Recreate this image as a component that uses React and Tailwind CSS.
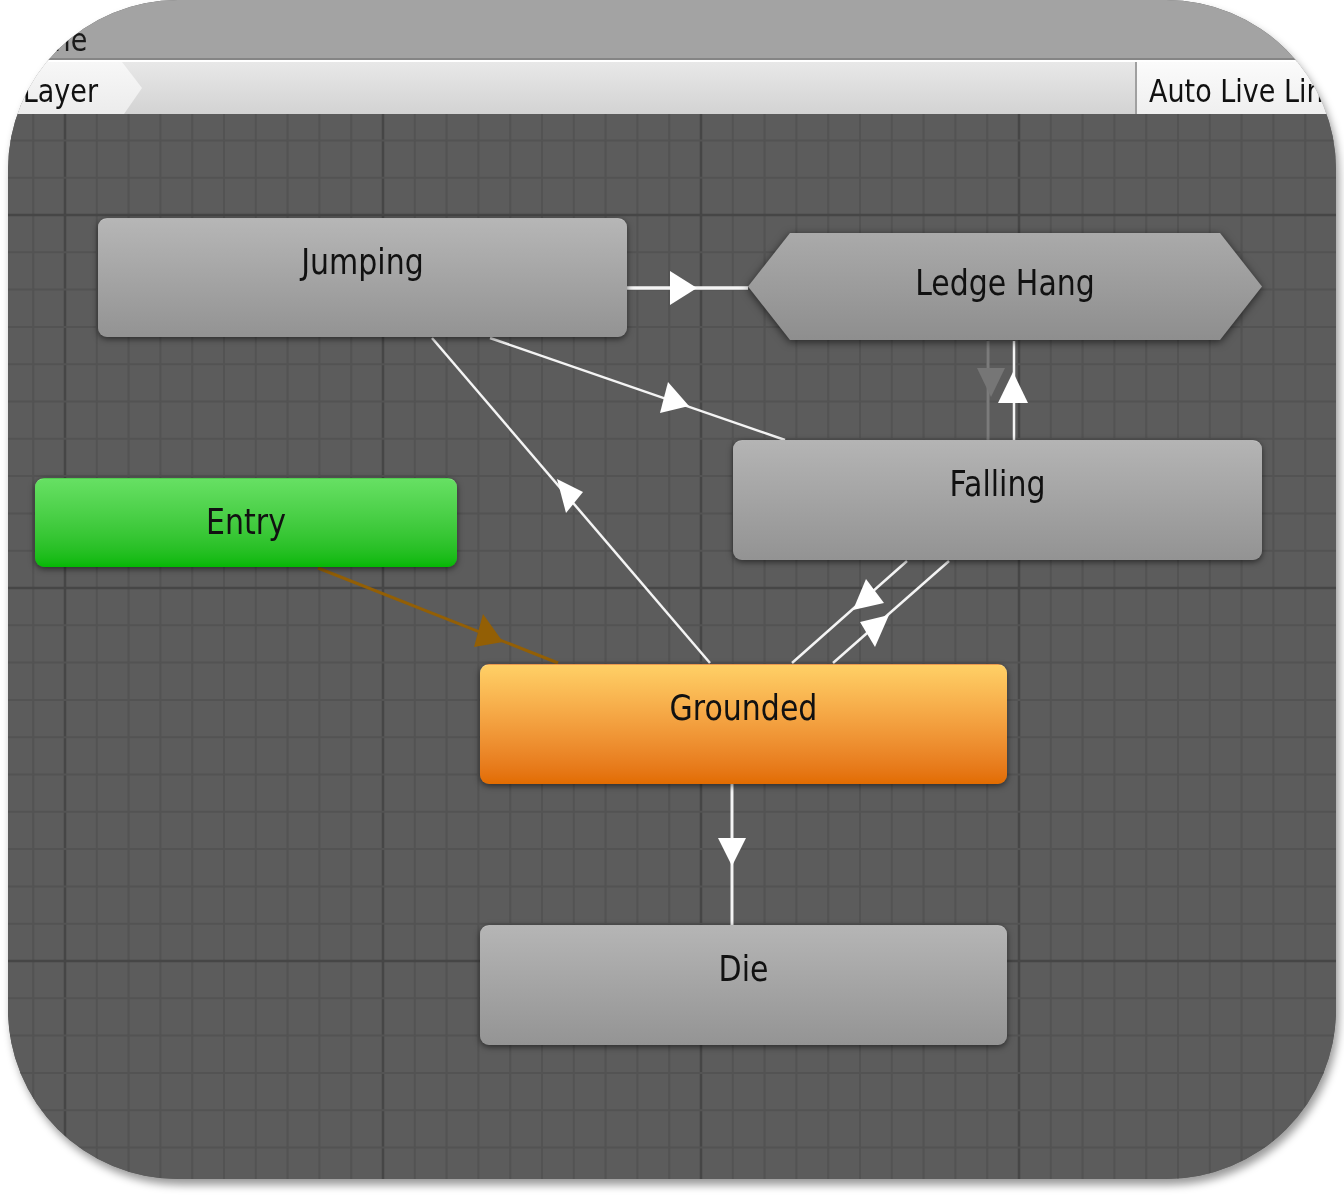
const GRID_X0 = 65;
const GRID_DX = 31.8;
const GRID_Y0 = 215;
const GRID_DY = 37.3;

function buildGrid() {
  const v = [];
  for (let k = -2; k <= 41; k++) {
    const x = GRID_X0 + GRID_DX * k;
    if (x > 8 && x < 1336) v.push({ at: x, major: k % 10 === 0 });
  }
  const h = [];
  for (let k = -2; k <= 27; k++) {
    const y = GRID_Y0 + GRID_DY * k;
    if (y > 114 && y < 1179) h.push({ at: y, major: k % 10 === 0 });
  }
  return { v, h };
}

const grid = buildGrid();

// transitions, in page coordinates
const EDGES = [
  { from: [627, 288], to: [748, 288], head: '697,288 670,271 670,305', w: 3.5 },
  { from: [490, 338], to: [785, 440], head: '689,406 668,382 660,413' },
  { from: [710, 663], to: [432, 338], head: '557,479 583,492 566,513' },
  { from: [1014, 341], to: [1014, 440], head: '1013,372 998,403 1028,403' },
  { from: [907, 561], to: [792, 663], head: '853,610 866,579 884,603' },
  { from: [949, 561], to: [833, 663], head: '889,615 860,622 875,647' },
  { from: [732, 784], to: [732, 925], head: '732,866 718,838 746,838', w: 3 },
];

function Label({ children }) {
  return (
    <span className="inline-block h-[36px] text-[30px] leading-[36px] text-[#111] scale-y-[1.17] whitespace-nowrap">
      {children}
    </span>
  );
}

function StateNode({ label, className }) {
  return (
    <div
      className={`absolute flex justify-center pt-[25px] rounded-[9px] border-t border-white/30 shadow-[0_2px_6px_rgba(0,0,0,0.55)] ${className}`}
    >
      <Label>{label}</Label>
    </div>
  );
}

function TitleBar() {
  return (
    <div className="h-[60px] shrink-0 flex items-center pt-[22px] bg-[#a3a3a3] border-b-2 border-[#858585]">
      <span className="ml-[-3px] inline-block text-[27px] leading-[32px] text-[#1a1a1a] scale-y-[1.17]">Scene</span>
    </div>
  );
}

function Toolbar() {
  return (
    <div className="h-[54px] shrink-0 flex border-t-2 border-white bg-gradient-to-b from-[#e8e8e8] to-[#d3d3d3]">
      <div className="w-[134px] flex justify-end items-center pt-[6px] pr-[44px] bg-gradient-to-b from-[#f7f7f7] to-[#ececec] [clip-path:polygon(0_0,114px_0,134px_50%,116px_100%,0_100%)]">
        <span className="inline-block text-[27px] leading-[32px] text-[#111] scale-y-[1.17] whitespace-nowrap">Base Layer</span>
      </div>
      <div className="flex-1" />
      <div className="w-[201px] flex items-center pt-[6px] pl-[12px] border-l-2 border-[#a0a0a0] bg-gradient-to-b from-[#fbfbfb] to-[#efefef]">
        <span className="inline-block text-[27px] leading-[32px] text-[#111] scale-y-[1.17] whitespace-nowrap">Auto Live Link</span>
      </div>
    </div>
  );
}

function Canvas() {
  return (
    <div className="relative flex-1 bg-[#5c5c5c]">
      <svg className="absolute inset-0" width="1328" height="1065" viewBox="8 114 1328 1065">
        {grid.v.map((l) => (
          <line
            key={'v' + l.at}
            x1={l.at}
            x2={l.at}
            y1={114}
            y2={1179}
            stroke={l.major ? '#464646' : '#535353'}
            strokeWidth={l.major ? 2.5 : 2}
          />
        ))}
        {grid.h.map((l) => (
          <line
            key={'h' + l.at}
            y1={l.at}
            y2={l.at}
            x1={8}
            x2={1336}
            stroke={l.major ? '#464646' : '#535353'}
            strokeWidth={l.major ? 2.5 : 2}
          />
        ))}

        {/* Entry -> Grounded */}
        <line x1={318} y1={568} x2={558} y2={663} stroke="#935f05" strokeWidth={3} />
        <polygon points="503,642 483,614 474,647" fill="#935f05" />

        {/* Ledge Hang -> Falling (muted) */}
        <line x1={988} y1={341} x2={988} y2={440} stroke="#7b7b7b" strokeWidth={3} />
        <polygon points="977,368 1005,368 991,397" fill="#767676" />

        {EDGES.map((e, i) => (
          <g key={i}>
            <line
              x1={e.from[0]}
              y1={e.from[1]}
              x2={e.to[0]}
              y2={e.to[1]}
              stroke="#f4f4f4"
              strokeWidth={e.w || 2.5}
            />
            <polygon points={e.head} fill="#ffffff" />
          </g>
        ))}
      </svg>

      <StateNode
        label="Jumping"
        className="left-[90px] top-[104px] w-[529px] h-[119px] bg-gradient-to-b from-[#b6b6b6] to-[#939393]"
      />

      {/* hexagonal sub-state machine */}
      <div className="absolute left-[740px] top-[119px] w-[514px] h-[107px] drop-shadow-[0_2px_4px_rgba(0,0,0,0.6)]">
        <div className="w-full h-full flex justify-center pt-[32px] bg-gradient-to-b from-[#aaaaaa] to-[#8e8e8e] [clip-path:polygon(42px_0,472px_0,514px_50%,472px_100%,42px_100%,0_50%)]">
          <Label>Ledge Hang</Label>
        </div>
      </div>

      <StateNode
        label="Entry"
        className="left-[27px] top-[364px] w-[422px] h-[89px] bg-gradient-to-b from-[#66e063] to-[#03b803]"
      />
      <StateNode
        label="Falling"
        className="left-[725px] top-[326px] w-[529px] h-[120px] bg-gradient-to-b from-[#b4b4b4] to-[#939393]"
      />
      <StateNode
        label="Grounded"
        className="left-[472px] top-[550px] w-[527px] h-[120px] bg-gradient-to-b from-[#ffd066] to-[#e26c00]"
      />
      <StateNode
        label="Die"
        className="left-[472px] top-[811px] w-[527px] h-[120px] bg-gradient-to-b from-[#b5b5b5] to-[#949494]"
      />
    </div>
  );
}

export default function App() {
  return (
    <div className="min-h-[1196px] bg-white pl-[8px] font-['DejaVu_Sans',sans-serif]">
      <div className="w-[1328px] h-[1179px] flex flex-col overflow-hidden rounded-[170px] bg-[#5c5c5c] shadow-[3px_6px_8px_rgba(0,0,0,0.4)]">
        <TitleBar />
        <Toolbar />
        <Canvas />
      </div>
    </div>
  );
}
